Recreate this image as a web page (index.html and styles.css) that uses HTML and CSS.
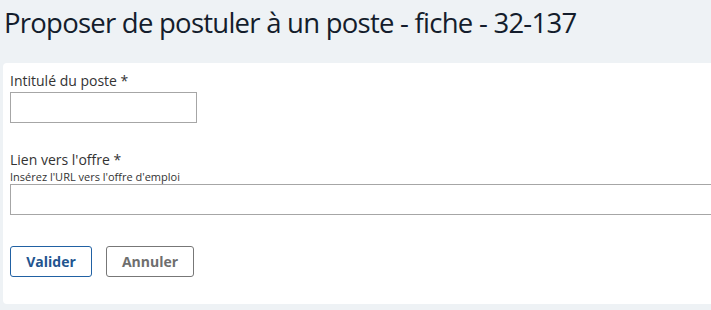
FILE: index.html
```html
<!DOCTYPE html>
<html lang="fr">
<head>
<meta charset="utf-8">
<title>Proposer de postuler</title>
<link rel="stylesheet" href="styles.css">
</head>
<body>
<div class="page">
  <h1 class="title">Proposer de postuler à un poste - fiche - 32-137</h1>
  <div class="card">
    <div class="field">
      <label class="label" for="poste">Intitulé du poste *</label>
      <input class="input input-short" id="poste" type="text">
    </div>
    <div class="field field-second">
      <label class="label" for="lien">Lien vers l'offre *</label>
      <div class="help">Insérez l'URL vers l'offre d'emploi</div>
      <input class="input input-long" id="lien" type="text">
    </div>
    <div class="actions">
      <button class="btn btn-primary" type="button">Valider</button>
      <button class="btn btn-secondary" type="button">Annuler</button>
    </div>
  </div>
</div>
</body>
</html>
```

FILE: styles.css
```css
html, body {
  margin: 0;
  padding: 0;
  background: #f4f6f8;
  font-family: "Open Sans", "Liberation Sans", sans-serif;
}
.page {
  width: 711px;
  height: 310px;
  overflow: hidden;
  background: #eef2f5;
}
.title {
  margin: 0;
  padding: 3px 0 0 4px;
  height: 63px;
  box-sizing: border-box;
  font-size: 27.5px;
  font-weight: 400;
  color: #141d2c;
  line-height: 40px;
  letter-spacing: -0.75px;
}
.card {
  margin-left: 3px;
  background: #ffffff;
  border-radius: 4px 0 0 4px;
  height: 241px;
  padding: 8px 0 0 7px;
  box-sizing: border-box;
}
.field {
  display: flex;
  flex-direction: column;
  align-items: flex-start;
}
.field-second {
  margin-top: 27px;
}
.label {
  font-size: 14px;
  line-height: 20px;
  color: #333333;
  margin-bottom: 1px;
}
.help {
  font-size: 11px;
  line-height: 13px;
  color: #333333;
  margin-bottom: 1px;
  margin-top: -1px;
}
.input {
  box-sizing: border-box;
  height: 31px;
  border: 1px solid #a6a6a6;
  border-radius: 0;
  background: #fff;
  padding: 0 6px;
  margin: 0;
  font-family: inherit;
  font-size: 14px;
}
.input-short {
  width: 187px;
}
.input-long {
  width: 720px;
}
.actions {
  display: flex;
  gap: 14px;
  margin-top: 31px;
}
.btn {
  box-sizing: border-box;
  height: 31px;
  border-radius: 3px;
  background: #fff;
  font-family: inherit;
  font-size: 14px;
  font-weight: 700;
  padding: 0;
  cursor: pointer;
}
.btn-primary {
  width: 82px;
  border: 1px solid #2161a3;
  color: #22548f;
}
.btn-secondary {
  width: 88px;
  border: 1px solid #777777;
  color: #6e6e6e;
}
```
